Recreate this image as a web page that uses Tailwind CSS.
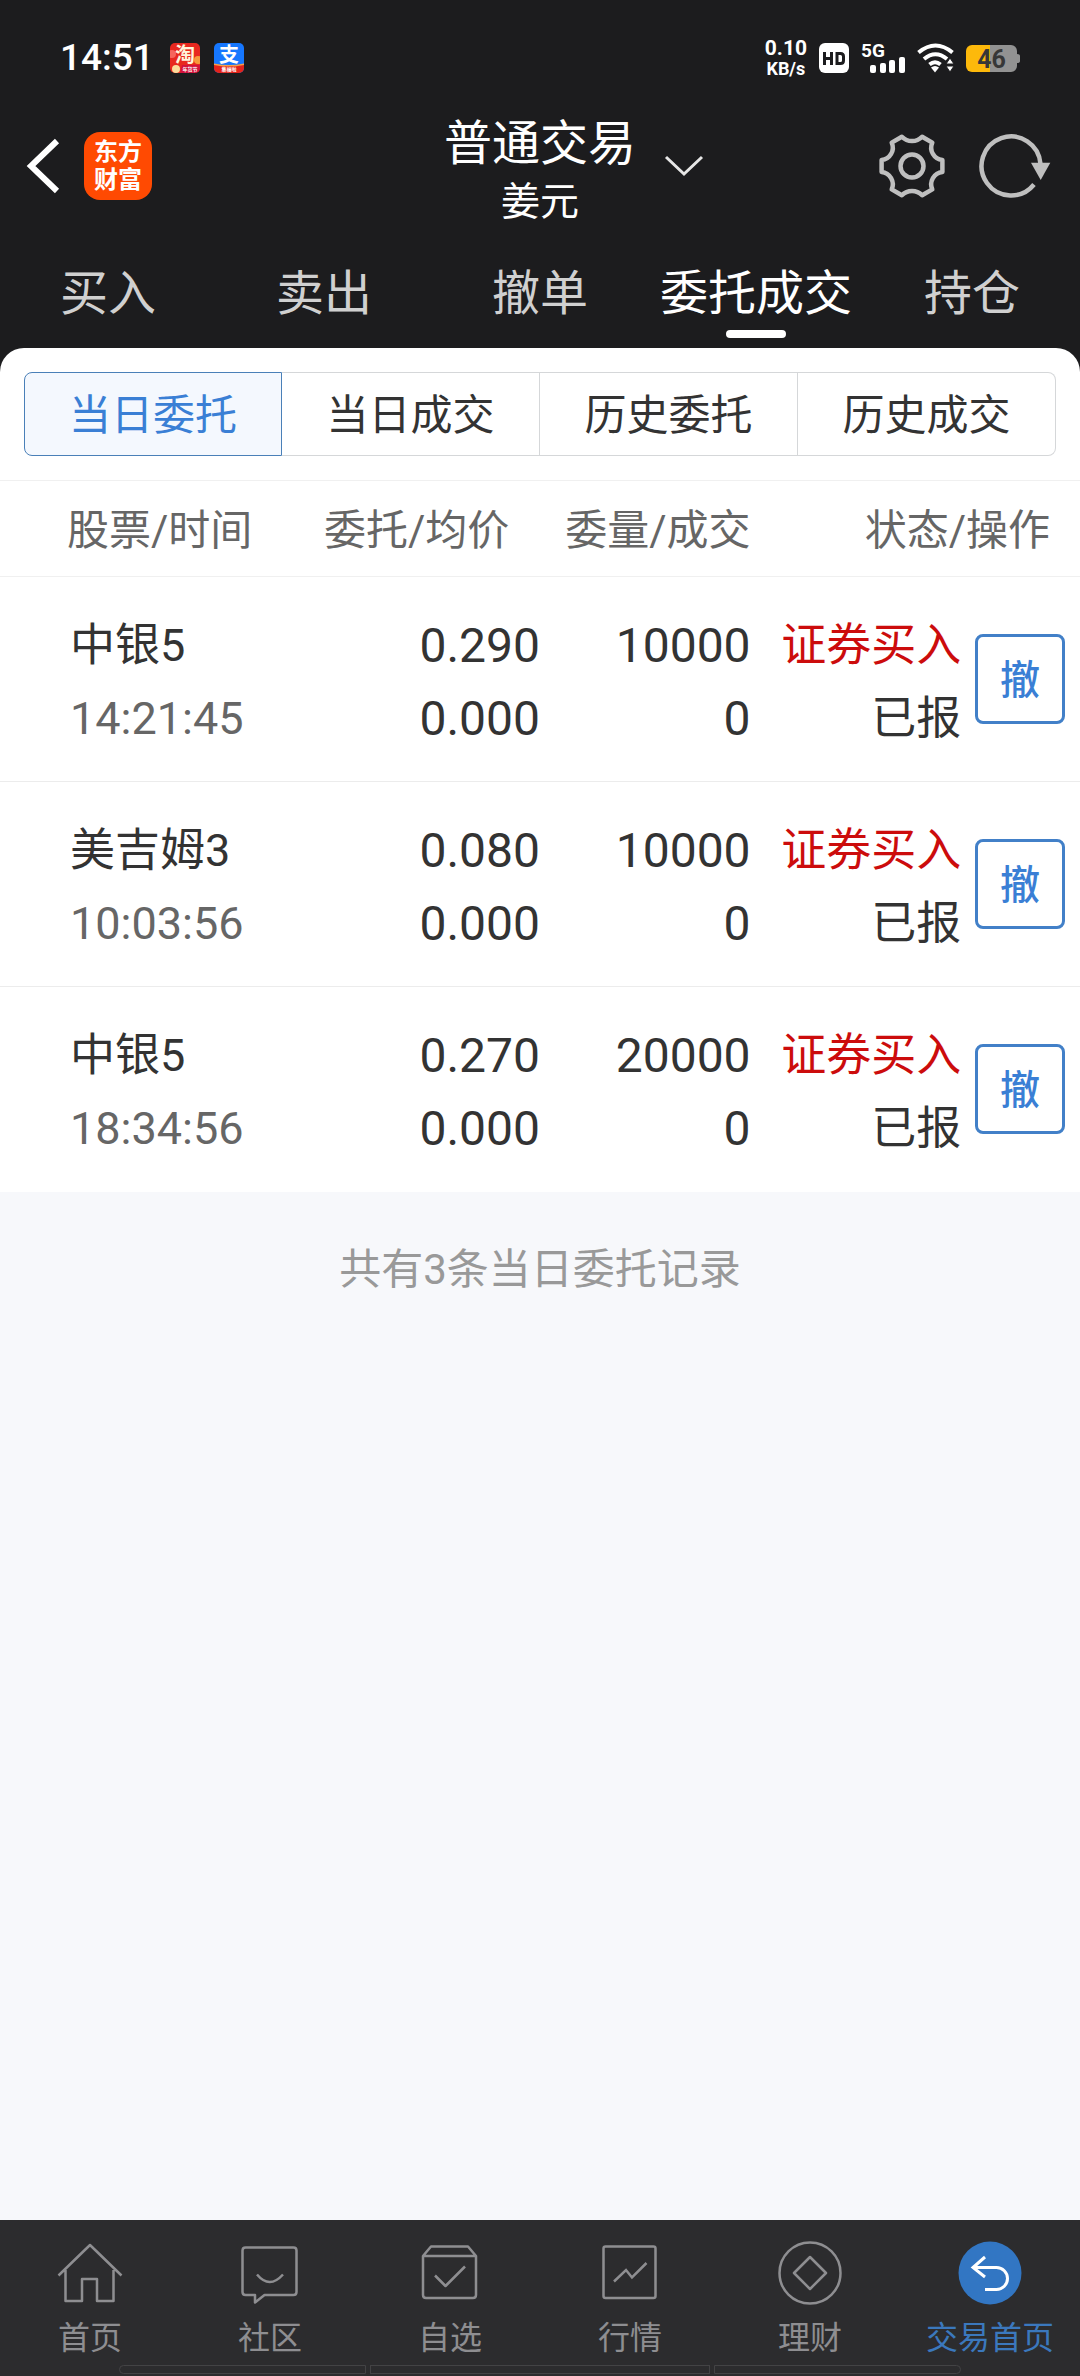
<!DOCTYPE html>
<html lang="zh-CN">
<head>
<meta charset="utf-8">
<meta name="viewport" content="width=device-width, initial-scale=1">
<title>普通交易</title>
<script src="https://cdn.jsdelivr.net/npm/@tailwindcss/browser@4"></script>
</head>
<body class="flex min-h-screen flex-col bg-[#f7f8fb] font-['Roboto','Noto_Sans_CJK_SC',sans-serif] text-[#333]">

<header class="bg-[#1c1c1e] text-white">
  <!-- status bar -->
  <div class="flex h-28 items-center justify-between px-[60px] pt-1">
    <div class="flex items-center gap-4">
      <span class="text-[37px] leading-[44px] font-medium">14:51</span>
      <div class="flex items-center gap-[14px]">
        <svg class="size-[30px]" viewBox="0 0 30 30" aria-label="淘宝">
          <rect width="30" height="30" rx="5" fill="#e8281f"/>
          <circle cx="2" cy="11" r="4" fill="#f6655c"/><circle cx="28" cy="17" r="4" fill="#f79a3c"/>
          <path d="M12 22h18v3a5 5 0 0 1-5 5H10z" fill="#d3123c"/>
          <circle cx="6" cy="26" r="4" fill="#fbdc9c"/>
          <text x="15" y="19" text-anchor="middle" font-size="20" font-weight="700" fill="#fff5dc">淘</text>
          <text x="20" y="28" text-anchor="middle" font-size="5" font-weight="700" fill="#fff">年货节</text>
        </svg>
        <svg class="size-[30px]" viewBox="0 0 30 30" aria-label="支付宝">
          <rect width="30" height="30" rx="5" fill="#1677ff"/>
          <path d="M0 21q15 3 30 0v4a5 5 0 0 1-5 5H5a5 5 0 0 1-5-5z" fill="#e3231b"/>
          <path d="M0 20.500q15 3 30 0v1.500q-15 3-30 0z" fill="#f5a04a"/>
          <text x="15" y="19" text-anchor="middle" font-size="20" font-weight="700" fill="#fff">支</text>
          <text x="15" y="28" text-anchor="middle" font-size="5" font-weight="700" fill="#fff">集福啦</text>
        </svg>
      </div>
    </div>
    <div class="flex items-center gap-3">
      <div class="text-center font-bold">
        <div class="text-[21px] leading-[22px]">0.10</div>
        <div class="text-[18px] leading-[20px]">KB/s</div>
      </div>
      <svg class="size-[30px]" viewBox="0 0 30 30" aria-label="HD">
        <rect width="30" height="30" rx="6" fill="#fff"/>
        <path d="M5.500 9v13M12.500 9v13M5.500 15.500h7M18 10.500h3.500q3 0 3 3v4q0 3-3 3H18z" fill="none" stroke="#1c1c1e" stroke-width="3"/>
      </svg>
      <svg class="h-[42px] w-11" viewBox="0 -6 44 42" fill="#fff">
        <text x="0" y="14" font-size="19" font-weight="700">5G</text>
        <rect x="9" y="22" width="6" height="8" rx="2"/><rect x="19" y="20" width="6" height="10" rx="2"/><rect x="28" y="17" width="6" height="13" rx="2"/><rect x="38" y="14" width="6" height="16" rx="2"/>
      </svg>
      <svg class="h-[30px] w-[37px]" viewBox="0 0 37 30" fill="none" stroke="#fff" stroke-width="4">
        <path d="M1.500 9.500q17-14 34 0M7 16q11.500-9.500 23 0M12.500 21.500q5.500-4.500 11 0"/>
        <path d="M14 24.500q4-3 8 0l-4 5z" fill="#fff" stroke="none"/>
        <path d="M33 15l4 6h-8zM33 29l4-6h-8z" fill="#fff" stroke="#1c1c1e" stroke-width="1"/>
      </svg>
      <svg class="h-[27px] w-[54px]" viewBox="0 0 54 27" aria-label="46%">
        <path d="M24 0h21a6 6 0 0 1 6 6v3q3 0 3 2v5q0 2-3 2v3a6 6 0 0 1-6 6H24z" fill="#929292"/>
        <path d="M24 0H6a6 6 0 0 0-6 6v15a6 6 0 0 0 6 6h18z" fill="#fdb90b"/>
        <text x="25.500" y="22.500" text-anchor="middle" font-size="25" font-weight="700" fill="#373737">46</text>
      </svg>
    </div>
  </div>

  <!-- title bar -->
  <div class="grid grid-cols-[1fr_auto_1fr] items-start">
    <div class="flex h-[108px] items-center gap-6 pl-[26px]">
      <button type="button" aria-label="返回">
        <svg class="h-14 w-[34px]" viewBox="0 0 34 56" fill="none" stroke="#fff" stroke-width="6"><path d="M31 3L5 28l26 25"/></svg>
      </button>
      <a href="#" class="flex size-[68px] flex-col items-center justify-center rounded-2xl bg-[#ff4a02] text-[24px] leading-[28px] font-bold">
        <span>东方</span><span>财富</span>
      </a>
    </div>
    <div class="pt-[2px] text-center">
      <h1 class="text-[48px] leading-[60px]">普通交易</h1>
      <p class="text-[39px] leading-[56px]">姜元</p>
    </div>
    <div class="flex h-[108px] items-center justify-between pr-[28px] pl-7">
      <button type="button" aria-label="切换账户">
        <svg class="h-[22px] w-10" viewBox="0 0 40 22" fill="none" stroke="#e6e6e6" stroke-width="3"><path d="M2 2l18 17L38 2"/></svg>
      </button>
      <div class="flex items-center gap-[31px]">
        <button type="button" aria-label="设置">
          <svg class="size-[70px]" viewBox="-35 -35 70 70" fill="none" stroke="#bfbfbf" stroke-width="4.500" stroke-linejoin="round">
            <path d="M30.400 5.900A12.500 12.500 0 0 0 20.300 23.400L10.100 29.300A14 14 0 0 0-10.100 29.300L-20.300 23.400A12.500 12.500 0 0 0-30.400 5.900V-5.900A12.500 12.500 0 0 0-20.300-23.400L-10.100-29.300A14 14 0 0 0 10.100-29.300L20.300-23.400A12.500 12.500 0 0 0 30.400-5.900Z"/>
            <circle r="11.500"/>
          </svg>
        </button>
        <button type="button" aria-label="刷新">
          <svg class="h-[70px] w-[74px]" viewBox="-33 -35 74 70" fill="none" stroke="#bfbfbf" stroke-width="4.500">
            <path d="M23 18.500A29.500 29.500 0 1 1 29.500-2"/>
            <path d="M20-3.300h19.300L29.700 14z" fill="#bfbfbf" stroke="none"/>
          </svg>
        </button>
      </div>
    </div>
  </div>

  <nav class="grid grid-cols-5 pt-[28px] pb-[10px] text-center text-[48px] leading-[72px] text-[#d0d0d0]">
    <a href="#">买入</a>
    <a href="#">卖出</a>
    <a href="#">撤单</a>
    <a href="#" aria-current="page" class="flex flex-col items-center whitespace-nowrap text-white">委托成交<span class="h-2 w-[60px] rounded-full bg-white"></span></a>
    <a href="#">持仓</a>
  </nav>
</header>

<main class="flex-1">
  <div class="bg-[#1c1c1e]">
    <div class="rounded-t-3xl bg-white px-6 py-6">
      <div class="grid h-[84px] grid-cols-4 text-[42px] leading-[60px]">
        <button type="button" class="rounded-l-lg border border-[#4a80b8] bg-[#f4f8fe] pt-1 text-[#3a7fd5]">当日委托</button>
        <button type="button" class="border-y border-r border-[#d5d7d9] pt-1">当日成交</button>
        <button type="button" class="border-y border-r border-[#d5d7d9] pt-1">历史委托</button>
        <button type="button" class="rounded-r-lg border-y border-r border-[#d5d7d9] pt-1">历史成交</button>
      </div>
    </div>
  </div>

  <table class="w-full table-fixed border-collapse bg-white">
    <colgroup><col class="w-[30%]"><col class="w-[20%]"><col class="w-[19.500%]"><col class="w-[19.500%]"><col class="w-[11%]"></colgroup>
    <thead class="border-y border-[#f0f0f0] text-[42px] leading-[60px] text-[#666]">
      <tr class="h-[96px]">
        <th class="pt-1 pl-[67px] text-left font-normal">股票/时间</th>
        <th class="pt-1 text-left font-normal whitespace-nowrap">委托/均价</th>
        <th class="pt-1 text-right font-normal whitespace-nowrap">委量/成交</th>
        <th colspan="2" class="pt-1 pr-[30px] text-right font-normal">状态/操作</th>
      </tr>
    </thead>
    <tbody class="text-right text-[45px] leading-[73px]">
      <tr class="h-[205px] border-b border-[#ececec]">
        <td class="pt-[6px] pl-[70px] text-left">中银5<br><span class="text-[#666]">14:21:45</span></td>
        <td class="pt-[6px] text-[48px]">0.290<br>0.000</td>
        <td class="pt-[6px] text-[48px]">10000<br>0</td>
        <td class="pt-[6px] whitespace-nowrap"><span class="text-[#cc0c0c]">证券买入</span><br>已报</td>
        <td class="pr-[15px]"><div class="flex justify-end"><button type="button" class="size-[90px] rounded-lg border-3 border-[#4280c8] pt-1 text-[40px] leading-[60px] font-medium text-[#3a7fd5]">撤</button></div></td>
      </tr>
      <tr class="h-[205px] border-b border-[#ececec]">
        <td class="pt-[6px] pl-[70px] text-left">美吉姆3<br><span class="text-[#666]">10:03:56</span></td>
        <td class="pt-[6px] text-[48px]">0.080<br>0.000</td>
        <td class="pt-[6px] text-[48px]">10000<br>0</td>
        <td class="pt-[6px] whitespace-nowrap"><span class="text-[#cc0c0c]">证券买入</span><br>已报</td>
        <td class="pr-[15px]"><div class="flex justify-end"><button type="button" class="size-[90px] rounded-lg border-3 border-[#4280c8] pt-1 text-[40px] leading-[60px] font-medium text-[#3a7fd5]">撤</button></div></td>
      </tr>
      <tr class="h-[205px]">
        <td class="pt-[6px] pl-[70px] text-left">中银5<br><span class="text-[#666]">18:34:56</span></td>
        <td class="pt-[6px] text-[48px]">0.270<br>0.000</td>
        <td class="pt-[6px] text-[48px]">20000<br>0</td>
        <td class="pt-[6px] whitespace-nowrap"><span class="text-[#cc0c0c]">证券买入</span><br>已报</td>
        <td class="pr-[15px]"><div class="flex justify-end"><button type="button" class="size-[90px] rounded-lg border-3 border-[#4280c8] pt-1 text-[40px] leading-[60px] font-medium text-[#3a7fd5]">撤</button></div></td>
      </tr>
    </tbody>
  </table>

  <p class="pt-12 text-center text-[42px] leading-[60px] text-[#999]">共有3条当日委托记录</p>
</main>

<footer class="bg-[#2c2c2e]">
  <nav class="grid grid-cols-6 pt-5 text-[32px] leading-[44px] text-[#8e8e91]">
    <a href="#" class="flex flex-col items-center gap-[10px]">
      <svg class="size-[66px]" viewBox="0 0 66 66" fill="none" stroke="currentColor" stroke-width="2.500"><path d="M1.500 35.500L33 5l31.500 30.500M8.500 30v31H25V39h15v22h16.500V30" stroke-linejoin="round"/></svg>首页</a>
    <a href="#" class="flex flex-col items-center gap-[10px]">
      <svg class="size-[66px]" viewBox="0 0 66 66" fill="none" stroke="currentColor" stroke-width="2.500" stroke-linejoin="round"><path d="M8.500 7.500h48q3 0 3 3V52q0 3-3 3h-29L18 62.500V55H8.500q-3 0-3-3V10.500q0-3 3-3z"/><path d="M20 34.500q12.500 15 26 0"/></svg>社区</a>
    <a href="#" class="flex flex-col items-center gap-[10px]">
      <svg class="size-[66px]" viewBox="0 0 66 66" fill="none" stroke="currentColor" stroke-width="2.500" stroke-linejoin="round"><path d="M6 16l8-9.500h37l8 9.500v39q0 3-3 3H9q-3 0-3-3zM6 16h53"/><path d="M18 35.500L28.500 46 48 26.500"/></svg>自选</a>
    <a href="#" class="flex flex-col items-center gap-[10px]">
      <svg class="size-[66px]" viewBox="0 0 66 66" fill="none" stroke="currentColor" stroke-width="2.500"><rect x="6.500" y="6.500" width="52" height="51.500" rx="2"/><path d="M17 41.500L29 30l6 7.500L49.500 23"/></svg>行情</a>
    <a href="#" class="flex flex-col items-center gap-[10px]">
      <svg class="size-[66px]" viewBox="0 0 66 66" fill="none" stroke="currentColor" stroke-width="2.500" stroke-linejoin="round"><circle cx="33" cy="33" r="30.500"/><path d="M33 17l16 16-16 16-16-16z"/></svg>理财</a>
    <a href="#" aria-current="page" class="flex flex-col items-center gap-[10px] text-[#3b78bd]">
      <svg class="size-[66px]" viewBox="0 0 66 66" fill="none"><circle cx="33" cy="33" r="31.500" fill="#3276c3"/><path d="M28 17L16 27.500 28 37M16 27.500h23.500a11 11 0 0 1 0 22H28" stroke="#fff" stroke-width="3"/></svg>交易首页</a>
  </nav>
  <div class="mx-[11%] mt-[5px] flex h-[11px] gap-1 pb-[2px]">
    <span class="flex-8 rounded-l-full border border-[#434345]"></span>
    <span class="flex-11 border border-[#434345]"></span>
    <span class="flex-8 rounded-r-full border border-[#434345]"></span>
  </div>
</footer>
</body>
</html>
